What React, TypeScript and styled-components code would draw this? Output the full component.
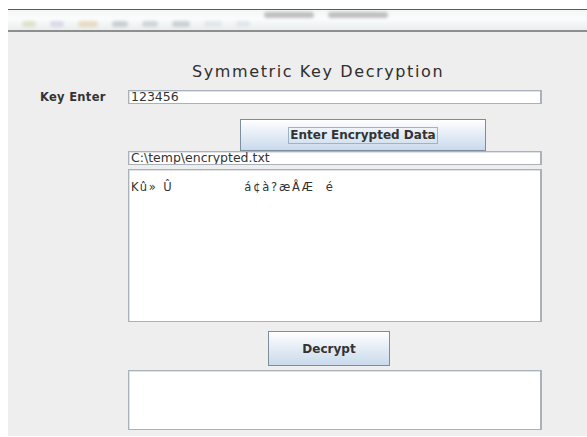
import React from 'react';
import styled, { createGlobalStyle } from 'styled-components';

const GlobalStyle = createGlobalStyle`
  html, body { margin: 0; padding: 0; background: #ffffff; }
  body { font-family: "DejaVu Sans", "Liberation Sans", sans-serif; color: #333333; }
`;

const Frame = styled.div`
  margin: 9px 0 0 8px;
  width: 579px;
`;

const TitleBar = styled.div`
  height: 20px;
  border-top: 1px solid #5c5c5c;
  border-bottom: 2px solid #8e8e8e;
  background: linear-gradient(180deg, #f4f6f6 0%, #fbfcfc 45%, #e9eeee 100%);
  display: flex;
  overflow: hidden;
`;

const Smudges = styled.div`
  flex: 1;
  display: flex;
  align-items: flex-end;
  gap: 14px;
  padding: 0 0 3px 14px;
  filter: blur(1.5px);
`;

const Smudge = styled.span<{ $w: number; $c: string; $up?: boolean }>`
  width: ${(p) => p.$w}px;
  height: 6px;
  border-radius: 3px;
  background: ${(p) => p.$c};
  opacity: 0.55;
  align-self: ${(p) => (p.$up ? 'flex-start' : 'auto')};
  margin-top: ${(p) => (p.$up ? '2px' : '0')};
`;

const Panel = styled.div`
  height: 404px;
  background: #eeeeee;
  box-sizing: border-box;
  padding-top: 31px;
`;

const Title = styled.div`
  margin-left: 184px;
  font-size: 16px;
  line-height: 18px;
  letter-spacing: 1.6px;
  color: #2e2e2e;
`;

const Row = styled.div<{ $top: number }>`
  display: grid;
  grid-template-columns: 120px 414px;
  align-items: center;
  margin-top: ${(p) => p.$top}px;
`;

const Label = styled.div`
  padding-left: 32px;
  font-size: 11.5px;
  font-weight: 700;
  letter-spacing: 0.3px;
  color: #333333;
`;

const Field = styled.div<{ $h: number }>`
  grid-column: 2;
  height: ${(p) => p.$h}px;
  box-sizing: border-box;
  background: #ffffff;
  border: 1px solid #a9b2bb;
  border-right: 2px solid #a9b2bb;
  box-shadow: inset 1px 1px 0 #dfe3e7;
  padding: 0 2px;
  font-size: 12.5px;
  line-height: 12px;
  color: #333333;
  white-space: pre;
  overflow: hidden;
`;

const AreaText = styled.div`
  padding-top: 11px;
  font-size: 11.5px;
  letter-spacing: 1.8px;
`;

const Center = styled.div<{ $left: number }>`
  grid-column: 2;
  padding-left: ${(p) => p.$left}px;
`;

const Button = styled.button<{ $w: number; $h: number }>`
  width: ${(p) => p.$w}px;
  height: ${(p) => p.$h}px;
  border: 1px solid #7e8d9c;
  border-radius: 0;
  background: linear-gradient(180deg, #ffffff 0%, #eef3f9 30%, #c9daec 100%);
  font-family: "DejaVu Sans", "Liberation Sans", sans-serif;
  font-size: 12px;
  font-weight: 700;
  color: #333333;
  display: flex;
  align-items: center;
  justify-content: center;
  padding: 0;
  cursor: pointer;
`;

const Focus = styled.span`
  border: 1px solid #9eb3c9;
  padding: 1px 1px;
  line-height: 13px;
`;

export default function App() {
  return (
    <>
      <GlobalStyle />
      <Frame>
        <TitleBar>
          <Smudges>
            <Smudge $w={14} $c="#cdd3a6" />
            <Smudge $w={14} $c="#c4c2dc" />
            <Smudge $w={20} $c="#e2c49a" />
            <Smudge $w={16} $c="#a9b0b8" />
            <Smudge $w={16} $c="#b5bcc4" />
            <Smudge $w={18} $c="#aab2ba" />
            <Smudge $w={18} $c="#d4dbe4" />
            <Smudge $w={14} $c="#d4dbe4" />
            <Smudge $w={50} $c="#8f8f8f" $up />
            <Smudge $w={60} $c="#8f8f8f" $up />
          </Smudges>
        </TitleBar>
        <Panel>
          <Title>Symmetric Key Decryption</Title>
          <Row $top={9}>
            <Label>Key Enter</Label>
            <Field $h={14}>123456</Field>
          </Row>
          <Row $top={15}>
            <Center $left={112}>
              <Button $w={246} $h={32}>
                <Focus>Enter Encrypted Data</Focus>
              </Button>
            </Center>
          </Row>
          <Row $top={0}>
            <Field $h={14}>C:\temp\encrypted.txt</Field>
          </Row>
          <Row $top={4}>
            <Field $h={153}>
              <AreaText>{'Kû» Û             á¢à?æÅÆ  é'}</AreaText>
            </Field>
          </Row>
          <Row $top={9}>
            <Center $left={140}>
              <Button $w={122} $h={35}>Decrypt</Button>
            </Center>
          </Row>
          <Row $top={4}>
            <Field $h={60} />
          </Row>
        </Panel>
      </Frame>
    </>
  );
}
